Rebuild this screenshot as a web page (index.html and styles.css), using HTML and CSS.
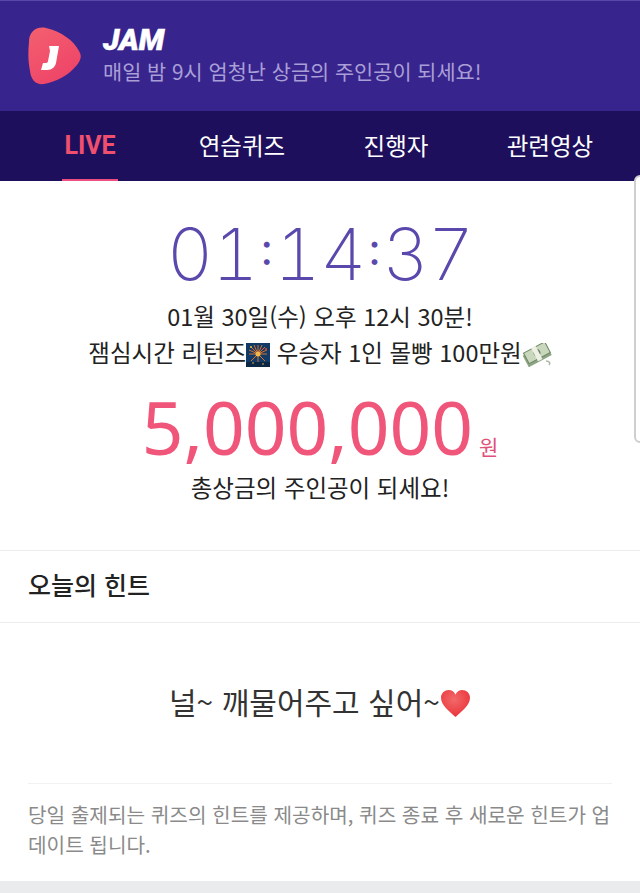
FILE: index.html
```html
<!DOCTYPE html>
<html lang="ko">
<head>
    <meta charset="UTF-8">
    <title>JAM</title>
    <link rel="stylesheet" href="styles.css">
</head>
<body>
    <header class="app-header">
        <svg class="logo" viewBox="0 0 54 58" width="54" height="58">
            <defs>
                <linearGradient id="logoFill" x1="0" y1="0" x2="0.6" y2="1">
                    <stop offset="0" stop-color="#f4606f"/>
                    <stop offset="1" stop-color="#ee4468"/>
                </linearGradient>
            </defs>
            <path d="M1 15C1 5 8 -1 18 1C33 4 46 14 51 24C54 29 53 33 49 38C41 48 28 55 16 57C8 58 3 53 2 44C0 34 0 25 1 15Z" fill="url(#logoFill)"/>
            <path d="M21 19H31L28 36C27 40 24 43 19 43H13L15 36H18C19 36 20 35 20 34L22 24Z" fill="#fff"/>
        </svg>
        <div class="brand">
            <div class="brand-name">JAM</div>
            <div class="brand-sub">매일 밤 9시 엄청난 상금의 주인공이 되세요!</div>
        </div>
    </header>

    <nav class="tabs">
        <a class="tab active">LIVE</a>
        <a class="tab">연습퀴즈</a>
        <a class="tab">진행자</a>
        <a class="tab">관련영상</a>
    </nav>

    <section class="live">
        <div class="timer">
            <span>01</span><span class="colon">:</span><span>14</span><span class="colon">:</span><span>37</span>
        </div>
        <p class="notice">01월 30일(수) 오후 12시 30분!</p>
        <p class="notice">잼심시간 리턴즈<svg class="emoji" viewBox="0 0 24 24" width="24" height="24">
                <rect width="24" height="24" fill="#123a66"/>
                <rect y="19" width="24" height="5" fill="#0c2745"/>
                <g stroke="#d9702c" stroke-width="1">
                    <path d="M12 11L12 2M12 11L12 19M12 11L3 11M12 11L21 11M12 11L5 4M12 11L19 4M12 11L5 18M12 11L19 18M12 11L8 2M12 11L16 2M12 11L3 7M12 11L21 7"/>
                </g>
                <circle cx="12" cy="11" r="2.5" fill="#f0b84a"/>
                <circle cx="5" cy="4" r="1" fill="#f5c542"/>
                <circle cx="20" cy="6" r="1" fill="#e8492a"/>
                <circle cx="7" cy="20" r="0.8" fill="#f5c542"/>
                <circle cx="17" cy="21" r="0.8" fill="#f5c542"/>
            </svg> 우승자 1인 몰빵 100만원<svg class="emoji" viewBox="0 0 30 24" width="30" height="24">
                <g transform="rotate(-28 15 12)">
                    <rect x="2" y="6" width="26" height="13" fill="#8da583"/>
                    <rect x="4" y="4" width="24" height="12" fill="#c9d8bd" stroke="#6d8566"/>
                    <circle cx="16" cy="10" r="3.5" fill="#6d8566"/>
                    <rect x="13" y="3" width="5" height="15" fill="#eef0e6"/>
                </g>
                <path d="M24 18C27 18 29 20 27 22" fill="none" stroke="#aab5a2" stroke-width="1.5"/>
            </svg></p>
        <div class="prize"><span class="prize-num">5,000,000</span><span class="prize-unit">원</span></div>
        <p class="notice">총상금의 주인공이 되세요!</p>
    </section>

    <section class="hint">
        <h2 class="hint-title">오늘의 힌트</h2>
        <div class="hint-body">
            <p class="hint-text">널~ 깨물어주고 싶어~<svg class="heart" viewBox="0 0 32 30" width="31" height="29">
                    <defs>
                        <radialGradient id="heartFill" cx="0.45" cy="0.35" r="0.7">
                            <stop offset="0" stop-color="#f26a6a"/>
                            <stop offset="1" stop-color="#ea2f37"/>
                        </radialGradient>
                    </defs>
                    <path d="M16 29C10 23 1 17 1 9C1 4 5 1 9 1C12 1 15 3 16 6C17 3 20 1 23 1C27 1 31 4 31 9C31 17 22 23 16 29Z" fill="url(#heartFill)"/>
                </svg></p>
            <p class="hint-note">당일 출제되는 퀴즈의 힌트를 제공하며, 퀴즈 종료 후 새로운 힌트가 업데이트 됩니다.</p>
        </div>
    </section>

    <div class="scroll-edge"></div>
</body>
</html>
```

FILE: styles.css
```css
* {
    margin: 0;
    padding: 0;
    box-sizing: border-box;
}

body {
    font-family: "Noto Sans CJK KR", "Noto Sans", sans-serif;
    background: #e9ebed;
    color: #222;
    height: 893px;
    overflow: hidden;
    position: relative;
}

.app-header {
    height: 111px;
    background: #38248d;
    border-top: 1px solid #5a47a8;
    display: flex;
    align-items: center;
    padding: 0 0 0 28px;
}

.logo {
    flex: none;
    margin-right: 21px;
}

.brand-name {
    font-family: Roboto, sans-serif;
    font-weight: 900;
    font-style: italic;
    font-size: 30px;
    line-height: 30px;
    color: #fff;
    -webkit-text-stroke: 0.5px #fff;
}

.brand-sub {
    font-size: 20.8px;
    line-height: 32px;
    color: #a89fd6;
}

.tabs {
    height: 70px;
    background: #1e0f5c;
    display: grid;
    grid-template-columns: 165px 154px 154px 154px;
}

.tab {
    color: #fff;
    font-size: 23.5px;
    line-height: 68px;
    text-align: center;
    white-space: nowrap;
}

.tab.active {
    color: #f0506e;
    font-weight: 700;
    font-family: Roboto, sans-serif;
    font-size: 25px;
    line-height: 70px;
    height: 70px;
    width: 56px;
    margin-left: 62px;
    border-bottom: 2px solid #ec4f80;
}

.live {
    background: #fff;
    height: 369px;
    text-align: center;
    padding-top: 30px;
}

.timer {
    font-family: Inter, sans-serif;
    font-weight: 200;
    font-size: 72px;
    line-height: 86px;
    font-variant-numeric: tabular-nums;
    letter-spacing: -1px;
    color: #5b48ad;
    display: flex;
    justify-content: center;
    margin-bottom: 1px;
}

.colon {
    font-size: 44px;
    font-weight: 400;
    line-height: 76px;
    margin: 0 3px;
}

.notice {
    font-size: 23.5px;
    line-height: 36px;
    color: #222;
}

.emoji {
    vertical-align: -5px;
}

.prize {
    height: 99px;
    padding-top: 22px;
    display: flex;
    justify-content: center;
    align-items: baseline;
}

.prize-num {
    font-family: "Noto Sans", sans-serif;
    font-size: 73px;
    line-height: 70px;
    color: #f0557a;
}

.prize-unit {
    font-size: 21px;
    line-height: 30px;
    color: #e0517a;
    margin-left: 6px;
}

.hint {
    background: #fff;
    height: 331px;
    border-top: 1px solid #ececec;
}

.hint-title {
    font-size: 25px;
    font-weight: 500;
    line-height: 66px;
    padding-left: 28px;
    border-bottom: 1px solid #ececec;
    height: 72px;
    color: #222;
}

.hint-body {
    padding: 0 28px;
}

.hint-text {
    font-size: 30px;
    line-height: 157px;
    height: 161px;
    text-align: center;
    color: #333;
    border-bottom: 1px solid #f2f2f2;
}

.heart {
    vertical-align: -4px;
}

.hint-note {
    font-size: 20.2px;
    line-height: 30px;
    padding-top: 16px;
    color: #8a8a8a;
    margin-right: -4px;
}

.scroll-edge {
    position: absolute;
    top: 175px;
    right: -6px;
    width: 12px;
    height: 268px;
    background: #fff;
    border: 2px solid #cfcfd2;
    border-radius: 8px;
}
```
